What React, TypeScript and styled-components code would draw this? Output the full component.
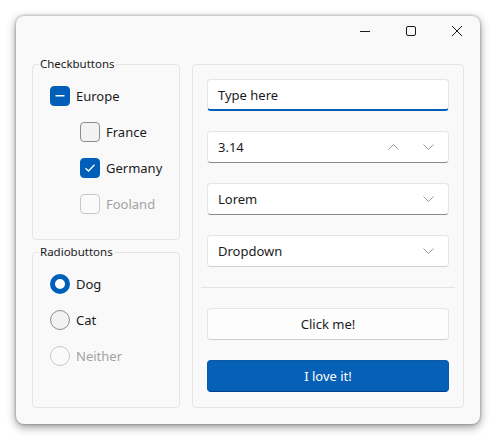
import React from "react";
import styled, { createGlobalStyle, css } from "styled-components";

const GlobalStyle = createGlobalStyle`
  html, body { margin: 0; padding: 0; background: #ffffff; }
  body { font-family: "Noto Sans", "Open Sans", sans-serif; color: #1b1b1b; }
  * { box-sizing: border-box; }
`;

const ACCENT = "#005fb8";

const Stage = styled.div`
  padding: 16px;
  width: 496px;
  height: 440px;
`;

const Window = styled.div`
  width: 464px;
  height: 408px;
  background: #f9f9f9;
  border-radius: 8px;
  box-shadow: 0 3px 10px rgba(0, 0, 0, 0.42), 0 0 3px rgba(0, 0, 0, 0.35);
  display: flex;
  flex-direction: column;
  overflow: hidden;
`;

const TitleBar = styled.div`
  height: 30px;
  display: flex;
  justify-content: flex-end;
  align-items: stretch;
`;

const CaptionButton = styled.div`
  width: 46px;
  display: flex;
  align-items: center;
  justify-content: center;
  padding-bottom: 1px;
  color: #1b1b1b;
`;

const Body = styled.div`
  flex: 1;
  display: flex;
  gap: 12px;
  padding: 10px 16px 16px 16px;
`;

const LeftColumn = styled.div`
  width: 148px;
  display: flex;
  flex-direction: column;
  gap: 4px;
`;

const Group = styled.fieldset<{ $grow?: boolean }>`
  margin: 0;
  min-width: 0;
  border: 1px solid #e5e5e5;
  border-radius: 4px;
  padding: 14px 0 25px 17px;
  display: flex;
  flex-direction: column;
  gap: 16px;
  ${(p) => p.$grow && css`flex: 1;`}
`;

const Legend = styled.legend`
  font-size: 11.5px;
  line-height: 16px;
  padding: 0 1px;
  margin-left: -11px;
  color: #1a1a1a;
`;

const Row = styled.label<{ $indent?: boolean; $disabled?: boolean }>`
  display: flex;
  align-items: center;
  gap: 6px;
  height: 20px;
  font-size: 13px;
  margin-left: ${(p) => (p.$indent ? "30px" : "0")};
  color: ${(p) => (p.$disabled ? "#a3a3a3" : "#1b1b1b")};
`;

type BoxState = "checked" | "mixed" | "off" | "disabled";

const Box = styled.span<{ $state: BoxState }>`
  width: 20px;
  height: 20px;
  border-radius: 4px;
  display: flex;
  align-items: center;
  justify-content: center;
  flex-shrink: 0;
  ${(p) =>
    p.$state === "checked" || p.$state === "mixed"
      ? css`background: ${ACCENT}; border: 1px solid ${ACCENT};`
      : p.$state === "off"
      ? css`background: #f2f2f2; border: 1px solid #8d8d8d;`
      : css`background: #fafafa; border: 1px solid #c9c9c9;`}
`;

type RadioState = "selected" | "off" | "disabled";

const Radio = styled.span<{ $state: RadioState }>`
  width: 20px;
  height: 20px;
  border-radius: 50%;
  flex-shrink: 0;
  ${(p) =>
    p.$state === "selected"
      ? css`background: #ffffff; border: 5px solid ${ACCENT};`
      : p.$state === "off"
      ? css`background: #f2f2f2; border: 1px solid #8d8d8d;`
      : css`background: #fafafa; border: 1px solid #c9c9c9;`}
`;

const Panel = styled.div`
  flex: 1;
  margin-top: 8px;
  border: 1px solid #e5e5e5;
  border-radius: 4px;
  padding: 14px;
  display: flex;
  flex-direction: column;
  gap: 20px;
`;

type Underline = "focus" | "strong" | "soft";

const Field = styled.div<{ $underline: Underline }>`
  height: 32px;
  background: #ffffff;
  border: 1px solid #e5e5e5;
  border-radius: 4px;
  display: flex;
  align-items: center;
  padding: 0 10px;
  font-size: 13px;
  color: #1b1b1b;
  ${(p) =>
    p.$underline === "focus"
      ? css`border-bottom: 2px solid ${ACCENT}; padding-top: 1px;`
      : p.$underline === "strong"
      ? css`border-bottom: 1px solid #8a8a8a;`
      : css`border-bottom: 1px solid #d0d0d0;`}
`;

const FieldText = styled.span`
  flex: 1;
`;

const Arrow = styled.span<{ $last?: boolean }>`
  width: 35px;
  display: flex;
  justify-content: center;
  color: #9a9a9a;
  margin-right: ${(p) => (p.$last ? "-8px" : "0")};
`;

const Separator = styled.div`
  height: 1px;
  background: #e3e3e3;
  margin: 0 -6px;
`;

const Button = styled.div<{ $primary?: boolean }>`
  height: 32px;
  border-radius: 4px;
  display: flex;
  align-items: center;
  justify-content: center;
  font-size: 13px;
  ${(p) =>
    p.$primary
      ? css`
          background: #0560b6;
          color: #ffffff;
          border: 1px solid #0a5aa8;
          border-bottom-color: #00408a;
        `
      : css`
          background: #fdfdfd;
          color: #1b1b1b;
          border: 1px solid #e5e5e5;
          border-bottom-color: #cfcfcf;
        `}
`;

const Chevron = ({ up }: { up?: boolean }) => (
  <svg width="11" height="6" viewBox="0 0 11 6">
    <path
      d={up ? "M0.5 5.5 L5.5 0.5 L10.5 5.5" : "M0.5 0.5 L5.5 5.5 L10.5 0.5"}
      fill="none"
      stroke="currentColor"
      strokeWidth="1"
    />
  </svg>
);

const CheckMark = () => (
  <svg width="12" height="10" viewBox="0 0 12 10">
    <path d="M1.5 5.2 L4.5 8 L10.5 1.8" fill="none" stroke="#fff" strokeWidth="1.3" />
  </svg>
);

const Dash = () => (
  <svg width="10" height="2" viewBox="0 0 10 2">
    <rect x="0.5" y="0" width="9" height="1.5" fill="#fff" />
  </svg>
);

export default function App() {
  return (
    <>
      <GlobalStyle />
      <Stage>
        <Window>
          <TitleBar>
            <CaptionButton>
              <svg width="10" height="10" viewBox="0 0 10 10">
                <line x1="0" y1="5.5" x2="10" y2="5.5" stroke="currentColor" strokeWidth="1" />
              </svg>
            </CaptionButton>
            <CaptionButton>
              <svg width="10" height="10" viewBox="0 0 10 10">
                <rect x="0.5" y="0.5" width="9" height="9" rx="1.5" fill="none" stroke="currentColor" strokeWidth="1" />
              </svg>
            </CaptionButton>
            <CaptionButton>
              <svg width="10" height="10" viewBox="0 0 10 10">
                <path d="M0 0 L10 10 M10 0 L0 10" stroke="currentColor" strokeWidth="1" />
              </svg>
            </CaptionButton>
          </TitleBar>
          <Body>
            <LeftColumn>
              <Group>
                <Legend>Checkbuttons</Legend>
                <Row>
                  <Box $state="mixed"><Dash /></Box>
                  Europe
                </Row>
                <Row $indent>
                  <Box $state="off" />
                  France
                </Row>
                <Row $indent>
                  <Box $state="checked"><CheckMark /></Box>
                  Germany
                </Row>
                <Row $indent $disabled>
                  <Box $state="disabled" />
                  Fooland
                </Row>
              </Group>
              <Group $grow>
                <Legend>Radiobuttons</Legend>
                <Row>
                  <Radio $state="selected" />
                  Dog
                </Row>
                <Row>
                  <Radio $state="off" />
                  Cat
                </Row>
                <Row $disabled>
                  <Radio $state="disabled" />
                  Neither
                </Row>
              </Group>
            </LeftColumn>
            <Panel>
              <Field $underline="focus">
                <FieldText>Type here</FieldText>
              </Field>
              <Field $underline="strong">
                <FieldText>3.14</FieldText>
                <Arrow><Chevron up /></Arrow>
                <Arrow $last><Chevron /></Arrow>
              </Field>
              <Field $underline="strong">
                <FieldText>Lorem</FieldText>
                <Arrow $last><Chevron /></Arrow>
              </Field>
              <Field $underline="soft">
                <FieldText>Dropdown</FieldText>
                <Arrow $last><Chevron /></Arrow>
              </Field>
              <Separator />
              <Button>Click me!</Button>
              <Button $primary>I love it!</Button>
            </Panel>
          </Body>
        </Window>
      </Stage>
    </>
  );
}
